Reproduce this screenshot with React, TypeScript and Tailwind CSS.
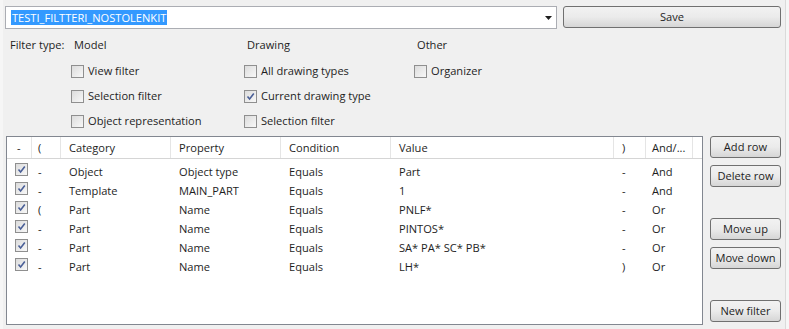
import React from "react";

const font = { fontFamily: '"Segoe UI", "Open Sans", "Noto Sans", sans-serif' };

const Check = ({ checked = false }: { checked?: boolean }) => (
  <span className="relative inline-flex h-[13px] w-[13px] shrink-0 items-center justify-center border border-[#8f8f8f] bg-gradient-to-br from-[#dcdcdc] to-[#f8f8f8]">
    {checked && (
      <svg width="9" height="9" viewBox="0 0 9 9" className="absolute">
        <path d="M1.5 4.5 L3.6 7 L7.8 1.5" fill="none" stroke="#4a5f97" strokeWidth="1.6" />
      </svg>
    )}
  </span>
);

const CheckLabel = ({ label, checked }: { label: string; checked?: boolean }) => (
  <div className="flex h-[25px] items-center gap-[4px]">
    <Check checked={checked} />
    <span>{label}</span>
  </div>
);

const Btn = ({ label, className = "" }: { label: string; className?: string }) => (
  <button
    className={
      "flex h-[22px] items-center justify-center rounded-[3px] border border-[#707070] bg-gradient-to-b from-[#f2f2f2] via-[#ebebeb] to-[#d6d6d6] text-[11.1px] text-[#1e1e1e] " +
      className
    }
  >
    {label}
  </button>
);

const rows = [
  ["-", "Object", "Object type", "Equals", "Part", "-", "And"],
  ["-", "Template", "MAIN_PART", "Equals", "1", "-", "And"],
  ["(", "Part", "Name", "Equals", "PNLF*", "-", "Or"],
  ["-", "Part", "Name", "Equals", "PINTOS*", "-", "Or"],
  ["-", "Part", "Name", "Equals", "SA* PA* SC* PB*", "-", "Or"],
  ["-", "Part", "Name", "Equals", "LH*", ")", "Or"],
];

const cols = [
  { w: "w-[25px]", pl: "pl-[10px]" },
  { w: "w-[29px]", pl: "pl-[6px]" },
  { w: "w-[110px]", pl: "pl-[8px]" },
  { w: "w-[110px]", pl: "pl-[8px]" },
  { w: "w-[110px]", pl: "pl-[8px]" },
  { w: "w-[223px]", pl: "pl-[8px]" },
  { w: "w-[32px]", pl: "pl-[8px]" },
  { w: "w-[47px]", pl: "pl-[6px]" },
];

export default function App() {
  const headers = ["-", "(", "Category", "Property", "Condition", "Value", ")", "And/..."];
  return (
    <div
      style={font}
      className="h-[329px] w-[789px] overflow-hidden border-x-[3px] border-x-[#f6f6f6] bg-[#f0f0f0] text-[11.1px] text-[#1e1e1e]"
    >
      <div className="flex h-full flex-col border-r border-r-[#dadada] pl-[2px] pr-[3px]">
        {/* top bar */}
        <div className="mt-[6px] flex gap-[6px]">
          <div className="flex h-[23px] w-[552px] items-center border border-[#abadb3] bg-white pl-[5px] pr-[4px]">
            <span className="bg-[#3399ff] px-[1px] leading-[15px] text-white">TESTI_FILTTERI_NOSTOLENKIT</span>
            <span className="flex-1" />
            <svg width="7" height="4" viewBox="0 0 7 4">
              <path d="M0 0 H7 L3.5 4 Z" fill="#1e1e1e" />
            </svg>
          </div>
          <Btn label="Save" className="w-[218px]" />
        </div>

        {/* filter type */}
        <div className="mt-[5px] flex pl-[5px]">
          <div className="w-[61px] pt-[3px]">Filter type:</div>
          <div className="w-[173px]">
            <div className="h-[25px] pl-[3px] pt-[3px]">Model</div>
            <CheckLabel label="View filter" />
            <CheckLabel label="Selection filter" />
            <CheckLabel label="Object representation" />
          </div>
          <div className="w-[170px]">
            <div className="h-[25px] pl-[3px] pt-[3px]">Drawing</div>
            <CheckLabel label="All drawing types" />
            <CheckLabel label="Current drawing type" checked />
            <CheckLabel label="Selection filter" />
          </div>
          <div>
            <div className="h-[25px] pl-[3px] pt-[3px]">Other</div>
            <CheckLabel label="Organizer" />
          </div>
        </div>

        {/* table + buttons */}
        <div className="mt-[2px] flex gap-[7px] pl-[1px]">
          <div className="h-[189px] w-[697px] border border-[#828790] bg-white">
            <div className="mb-[3px] flex h-[22px] border-b border-[#d5d5d5]">
              {headers.map((h, i) => (
                <div key={i} className={`${cols[i].w} ${cols[i].pl} flex items-center border-r border-[#e5e5e5] pt-[1px] leading-none`}>
                  {h}
                </div>
              ))}
            </div>
            {rows.map((r, ri) => (
              <div key={ri} className="flex h-[19px] items-center">
                <div className={`${cols[0].w} pl-[8px]`}>
                  <Check checked />
                </div>
                {r.map((c, ci) => (
                  <div key={ci} className={`${cols[ci + 1].w} ${cols[ci + 1].pl} leading-none`}>
                    {c}
                  </div>
                ))}
              </div>
            ))}
          </div>
          <div className="flex w-[71px] flex-col">
            <Btn label="Add row" />
            <Btn label="Delete row" className="mt-[7px]" />
            <Btn label="Move up" className="mt-[31px]" />
            <Btn label="Move down" className="mt-[7px]" />
            <Btn label="New filter" className="mt-[31px]" />
          </div>
        </div>
      </div>
    </div>
  );
}
